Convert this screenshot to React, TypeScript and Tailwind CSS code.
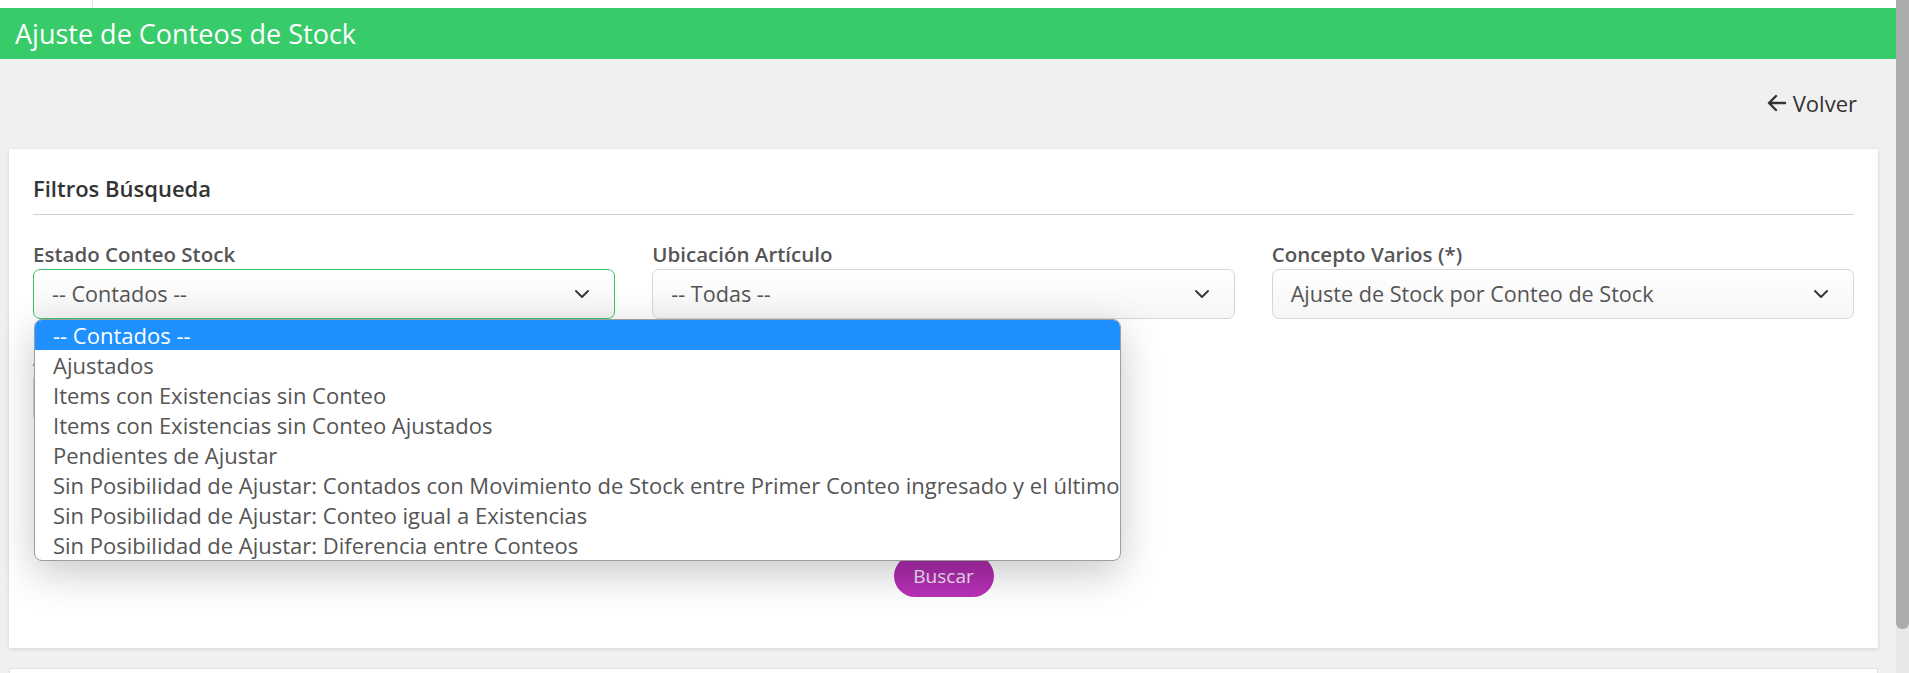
import React from 'react';

const opciones = [
  '-- Contados --',
  'Ajustados',
  'Items con Existencias sin Conteo',
  'Items con Existencias sin Conteo Ajustados',
  'Pendientes de Ajustar',
  'Sin Posibilidad de Ajustar: Contados con Movimiento de Stock entre Primer Conteo ingresado y el último',
  'Sin Posibilidad de Ajustar: Conteo igual a Existencias',
  'Sin Posibilidad de Ajustar: Diferencia entre Conteos',
];

const Chevron = () => (
  <svg width="16" height="10" viewBox="0 0 16 10" fill="none" stroke="#343a40" strokeWidth="2" strokeLinecap="round" strokeLinejoin="round">
    <path d="M2 2l6 6 6-6" />
  </svg>
);

const FakeSelect = ({ value, focused }: { value: string; focused?: boolean }) => (
  <div
    className={`h-[50px] rounded-[7px] border bg-gradient-to-b from-white to-[#f6f6f6] flex items-center justify-between pl-[18px] pr-[24px] text-[21.6px] text-[#555] ${
      focused ? 'border-[#3cc468]' : 'border-[#d6d6d6]'
    }`}
  >
    <span>{value}</span>
    <Chevron />
  </div>
);

const App = () => {
  return (
    <div className="flex h-[673px] overflow-hidden bg-[#f0f0f0] font-['Open_Sans',sans-serif]">
      <div className="flex-1 min-w-0">
        {/* top strip */}
        <div className="h-2 bg-white">
          <div className="w-[93px] h-full border-r border-[#e4e4e4]" />
        </div>

        {/* header */}
        <div className="h-[51px] bg-[#37cb69] flex items-center pl-[15px]">
          <h1 className="text-[27px] text-white leading-none">Ajuste de Conteos de Stock</h1>
        </div>

        {/* volver */}
        <div className="flex justify-end pr-[39px] pt-[29px]">
          <button className="flex items-center gap-[6px] text-[22px] leading-[30px] text-[#333]">
            <svg width="20" height="18" viewBox="0 0 20 18" fill="none" stroke="#333" strokeWidth="2.4" strokeLinecap="round" strokeLinejoin="round">
              <path d="M18 9H3M9 2L2 9l7 7" />
            </svg>
            Volver
          </button>
        </div>

        {/* filtros card */}
        <div className="ml-[9px] mr-[18px] mt-[31px] bg-white px-[24px] pt-[24px] pb-[51px] shadow-[0_1px_4px_rgba(0,0,0,0.12)]">
          <div className="border-b border-[#d0d0d0] pb-[11px]">
            <h2 className="text-[22px] leading-[30px] font-semibold text-[#333]">Filtros Búsqueda</h2>
          </div>

          <div className="grid grid-cols-3 gap-x-[37px] mt-[25px]">
            <div className="relative">
              <label className="block text-[20.5px] leading-[28px] font-semibold text-[#555] mb-px">Estado Conteo Stock</label>
              <FakeSelect value="-- Contados --" focused />

              {/* open dropdown */}
              <div className="absolute left-px top-[79px] z-10 w-[1087px] rounded-[8px] border border-[#9e9e9e] bg-white shadow-[0_12px_40px_rgba(0,0,0,0.22)] overflow-hidden">
                {opciones.map((o, i) => (
                  <div
                    key={o}
                    className={`h-[30px] leading-[30px] pl-[18px] text-[22px] whitespace-nowrap ${
                      i === 0 ? 'bg-[#1e90ff] text-white' : 'text-[#555]'
                    }`}
                  >
                    {o}
                  </div>
                ))}
              </div>
            </div>
            <div>
              <label className="block text-[20.5px] leading-[28px] font-semibold text-[#555] mb-px">Ubicación Artículo</label>
              <FakeSelect value="-- Todas --" />
            </div>
            <div>
              <label className="block text-[20.5px] leading-[28px] font-semibold text-[#555] mb-px">Concepto Varios (*)</label>
              <FakeSelect value="Ajuste de Stock por Conteo de Stock" />
            </div>
          </div>

          {/* second row, covered by the dropdown */}
          <div className="grid grid-cols-3 gap-x-[37px] mt-[25px]">
            <div>
              <label className="block text-[20.5px] leading-[28px] font-semibold text-[#555] mb-px">Artículo</label>
              <div className="h-[50px] rounded-[7px] border border-[#d6d6d6] bg-white" />
            </div>
          </div>

          <div className="flex justify-center mt-[132px]">
            <button className="h-[42px] w-[100px] rounded-full bg-gradient-to-b from-[#a62aa9] to-[#bb31b9] text-[19px] text-[#f1e3f2]">
              Buscar
            </button>
          </div>
        </div>

        {/* next card */}
        <div className="ml-[9px] mr-[18px] mt-[20px] h-16 bg-white border border-[#e0e0e0]" />
      </div>

      {/* scrollbar */}
      <div className="w-[13px] bg-[#e8e8e8]">
        <div className="h-[629px] bg-[#acacac] rounded-b-[6px]" />
      </div>
    </div>
  );
};

export default App;
